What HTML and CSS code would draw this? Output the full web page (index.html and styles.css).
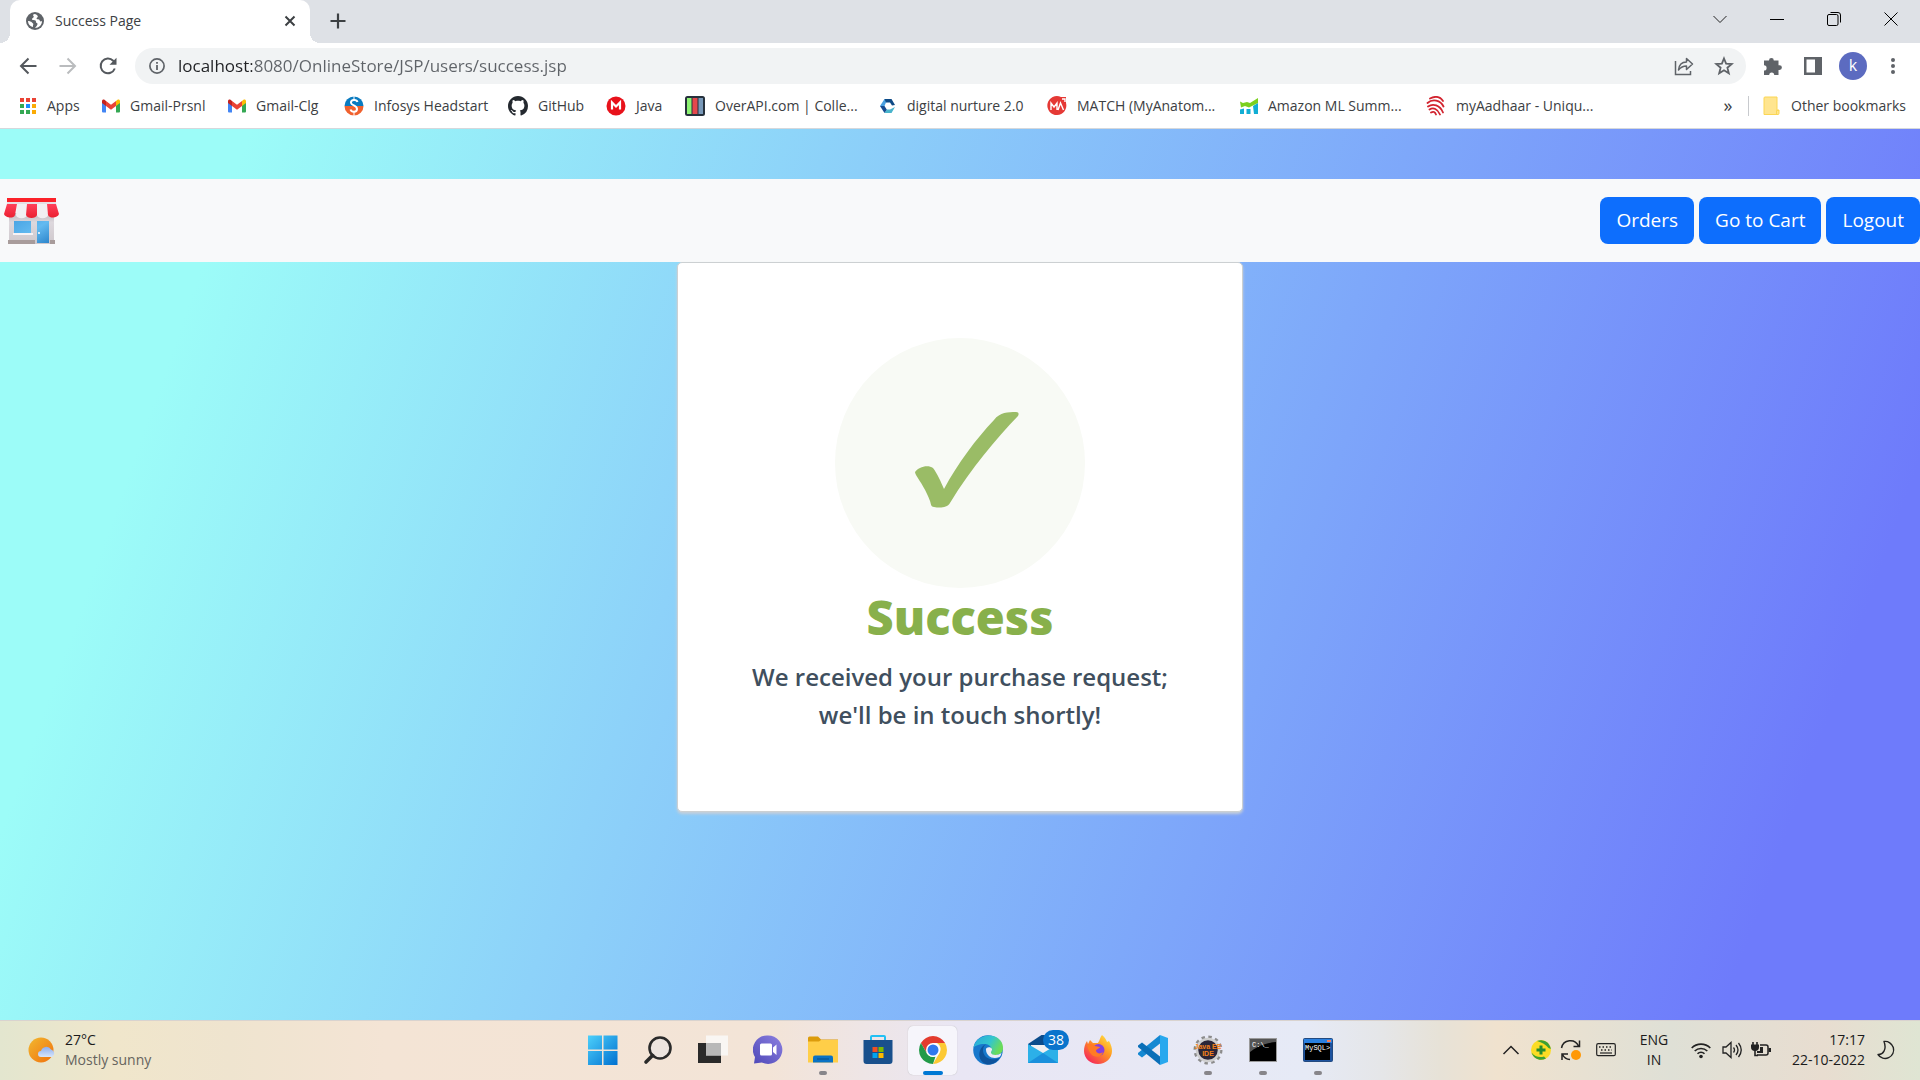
FILE: index.html
```html
<!DOCTYPE html>
<html lang="en">
<head>
<meta charset="utf-8">
<title>Success Page</title>
<link rel="stylesheet" href="styles.css">
</head>
<body>
<header class="browser">
  <div class="tab-strip">
    <div class="tab">
      <svg width="18" height="18" viewBox="0 0 18 18"><circle cx="9" cy="9" r="9" fill="#5f6368"/><path d="M9 2c-2 0-2.500 1-1.500 2 .8 1-.2 1.600-1 2.200C5.500 7 6 8 7.500 8c2 0 2.500.8 2.500 2s1.500.8 1.500 2-1 2-2.500 4c4 0 7-3 7-7-1 .8-2 .5-2.300-.5-.3-1.200-1.200-1-2.200-1.200-1.500 0-1-1.500 0-2C12.500 4.800 11.500 3 9 2zM2 9c1.500 0 3 .5 4 1.500S8 12 7 13v2C4 14.500 2 12 2 9z" fill="#fff"/></svg>
      <span class="tab-title">Success Page</span>
      <button class="icon-btn tab-close" aria-label="Close tab"><svg width="12" height="12" viewBox="0 0 12 12"><path d="M1.500 1.500l9 9M10.500 1.500l-9 9" stroke="#3c4043" stroke-width="2"/></svg></button>
    </div>
    <button class="icon-btn new-tab" aria-label="New tab"><svg width="16" height="16" viewBox="0 0 16 16"><path d="M8 0.500v15M0.500 8h15" stroke="#3c4043" stroke-width="2.200"/></svg></button>
    <div class="window-controls">
      <button class="icon-btn" aria-label="Search tabs"><svg width="14" height="14" viewBox="0 0 14 14"><path d="M.5 4L7 10.500 13.500 4" fill="none" stroke="#222"/></svg></button>
      <button class="icon-btn" aria-label="Minimize"><svg width="14" height="14" viewBox="0 0 14 14"><path d="M0 7.500h14" stroke="#000"/></svg></button>
      <button class="icon-btn" aria-label="Restore"><svg width="14" height="14" viewBox="0 0 14 14"><rect x=".5" y="2.500" width="10.500" height="11" rx="1.500" fill="none" stroke="#000"/><path d="M3.500.5H11a2.500 2.500 0 0 1 2.500 2.500v7.500" fill="none" stroke="#000"/></svg></button>
      <button class="icon-btn" aria-label="Close"><svg width="14" height="14" viewBox="0 0 14 14"><path d="M.5.5l13 13M13.500.5l-13 13" stroke="#000"/></svg></button>
    </div>
  </div>

  <div class="toolbar">
    <button class="icon-btn" aria-label="Back"><svg width="18" height="18" viewBox="0 0 18 18"><path d="M17.500 9H2M9.500 1.500L2 9l7.500 7.500" fill="none" stroke="#54585d" stroke-width="2"/></svg></button>
    <button class="icon-btn" aria-label="Forward"><svg width="18" height="18" viewBox="0 0 18 18"><path d="M.5 9H16M8.500 1.500L16 9l-7.500 7.500" fill="none" stroke="#babcbe" stroke-width="2"/></svg></button>
    <button class="icon-btn" aria-label="Reload"><svg width="18" height="18" viewBox="0 0 18 18"><path d="M15.800 11.500A7.300 7.300 0 1 1 14.200 3.800L16 5.500" fill="none" stroke="#54585d" stroke-width="2"/><path d="M17.500.8v7h-7z" fill="#54585d"/></svg></button>
    <div class="omnibox">
      <svg width="16" height="16" viewBox="0 0 16 16"><circle cx="8" cy="8" r="7.100" fill="none" stroke="#5f6368" stroke-width="1.700"/><path d="M8 7v5M8 4v1.800" stroke="#5f6368" stroke-width="1.800"/></svg>
      <input class="url" type="text" aria-label="Address" value="localhost:8080/OnlineStore/JSP/users/success.jsp">
      <button class="icon-btn" aria-label="Share"><svg width="20" height="20" viewBox="0 0 20 20"><path d="M1.500 5v13.500h15V15" fill="none" stroke="#5f6368" stroke-width="1.500"/><path d="M4.500 14c.5-5 3-8 8-8V2.500L18.500 8l-6 5.500V10c-4 0-6 1.500-8 4z" fill="none" stroke="#5f6368" stroke-width="1.500" stroke-linejoin="round"/></svg></button>
      <button class="icon-btn" aria-label="Bookmark"><svg width="20" height="20" viewBox="0 0 20 20"><path d="M10 2.500l2.100 5.200 5.600.4-4.300 3.600 1.400 5.500L10 14.200l-4.800 3 1.400-5.500L2.300 8.100l5.600-.4z" fill="none" stroke="#5f6368" stroke-width="1.800"/></svg></button>
    </div>
    <button class="icon-btn" aria-label="Extensions"><svg width="18" height="18" viewBox="0 0 18 18"><path d="M0 3.500h5a2.400 2.400 0 0 1 4.800 0h4.700v4.700h1a2.400 2.400 0 0 1 0 4.800h-1v5h-4.300a2.500 2.500 0 0 0-5 0H0v-4.500a2.600 2.600 0 0 0 0-5.200z" fill="#5f6368"/></svg></button>
    <button class="icon-btn" aria-label="Side panel"><svg width="18" height="18" viewBox="0 0 18 18"><path d="M0 0h18v18H0zM2.500 2.500v13h8.500v-13z" fill="#5f6368" fill-rule="evenodd"/></svg></button>
    <button class="icon-btn" aria-label="Profile"><span class="avatar">k</span></button>
    <button class="icon-btn" aria-label="Menu"><svg width="18" height="18" viewBox="0 0 18 18"><g fill="#5f6368"><circle cx="9" cy="3" r="2"/><circle cx="9" cy="9" r="2"/><circle cx="9" cy="15" r="2"/></g></svg></button>
  </div>

  <nav class="bookmarks" aria-label="Bookmarks">
    <a href="#"><svg width="18" height="18" viewBox="0 0 18 18"><path d="M1 1h4v4H1zM7 1h4v4H7zM13 1h4v4h-4z" fill="#ea4335"/><path d="M1 7h4v4H1zM1 13h4v4H1z" fill="#34a853"/><path d="M7 13h4v4H7z" fill="#34a853"/><path d="M7 7h4v4H7z" fill="#1a8cff"/><path d="M13 7h4v4h-4zM13 13h4v4h-4z" fill="#fbab05"/></svg>Apps</a>
    <a href="#"><svg width="18" height="18" viewBox="0 0 18 18"><path d="M0 4v10.500a1 1 0 0 0 1 1h3V7z" fill="#4285f4"/><path d="M18 4v10.500a1 1 0 0 1-1 1h-3V7z" fill="#34a853"/><path d="M14 4l1.500-1.200C16.500 2 18 2.700 18 4v2l-4 3z" fill="#fbbc04"/><path d="M4 9V4l5 3.800L14 4v5l-5 3.800z" fill="#ea4335"/><path d="M0 6V4c0-1.300 1.500-2 2.500-1.200L4 4v5z" fill="#c5221f"/></svg>Gmail-Prsnl</a>
    <a href="#"><svg width="18" height="18" viewBox="0 0 18 18"><path d="M0 4v10.500a1 1 0 0 0 1 1h3V7z" fill="#4285f4"/><path d="M18 4v10.500a1 1 0 0 1-1 1h-3V7z" fill="#34a853"/><path d="M14 4l1.500-1.200C16.500 2 18 2.700 18 4v2l-4 3z" fill="#fbbc04"/><path d="M4 9V4l5 3.800L14 4v5l-5 3.800z" fill="#ea4335"/><path d="M0 6V4c0-1.300 1.500-2 2.500-1.200L4 4v5z" fill="#c5221f"/></svg>Gmail-Clg</a>
    <a href="#"><svg width="20" height="20" viewBox="0 0 20 20"><path d="M.5 10a9.500 9.500 0 0 1 19 0z" fill="#0a7bc0"/><path d="M.5 10a9.500 9.500 0 0 0 19 0z" fill="#f0612e"/><path d="M13.500 6c-1-3-7-2.500-6.500.8C7.500 10 13 9 13 13c0 3.500-5.500 3.500-6.500.5" fill="none" stroke="#fff" stroke-width="2"/><path d="M10 0v4M10 16v4" stroke="#fff"/></svg>Infosys Headstart</a>
    <a href="#"><svg width="20" height="20" viewBox="0 0 16 16"><path fill="#24292f" d="M8 0C3.580 0 0 3.580 0 8c0 3.540 2.290 6.530 5.470 7.590.4.070.55-.17.55-.38 0-.19-.01-.82-.01-1.490-2.010.37-2.530-.49-2.690-.94-.09-.23-.48-.94-.82-1.130-.28-.15-.68-.52-.01-.53.63-.01 1.080.58 1.230.82.72 1.210 1.870.87 2.330.66.070-.52.28-.87.51-1.070-1.780-.2-3.640-.89-3.640-3.950 0-.87.31-1.590.82-2.150-.08-.2-.36-1.020.08-2.120 0 0 .67-.21 2.200.82.64-.18 1.320-.27 2-.27s1.360.09 2 .27c1.530-1.040 2.200-.82 2.200-.82.44 1.100.16 1.920.08 2.120.51.56.82 1.270.82 2.150 0 3.070-1.870 3.750-3.650 3.950.29.25.54.73.54 1.480 0 1.070-.01 1.930-.01 2.200 0 .21.15.46.55.38A8 8 0 0 0 16 8c0-4.420-3.580-8-8-8z"/></svg>GitHub</a>
    <a href="#"><svg width="20" height="20" viewBox="0 0 20 20"><circle cx="10" cy="10" r="9.500" fill="#e8121b"/><path d="M6 13.500v-7l4 4 4-4v7" fill="none" stroke="#fff" stroke-width="2.200"/></svg>Java</a>
    <a href="#"><svg width="20" height="20" viewBox="0 0 20 20"><rect width="20" height="20" rx="2.500" fill="#26313c"/><path d="M2 2h4.500v16H2z" fill="#8df272"/><path d="M7.500 2h5v16h-5z" fill="#e5484c"/><path d="M13.500 2H18v16h-4.500z" fill="#7898b8"/></svg>OverAPI.com | Colle...</a>
    <a href="#"><svg width="18" height="18" viewBox="0 0 18 18"><path d="M5.500 2H12l-5 3.500L5.500 9 1 9z" fill="#4aa0e0"/><path d="M1 9h4.500L8 13l-2.500 3z" fill="#174b91"/><path d="M5.500 16L8 12.500h3l5-2.500-3.500 6z" fill="#49b4cc"/><path d="M5.500 2h7L16 8l-3 .5L11 5.500H7z" fill="#0e4a86"/></svg>digital nurture 2.0</a>
    <a href="#"><svg width="20" height="20" viewBox="0 0 20 20"><path d="M14 1a9.500 9.500 0 1 0 5 6V1z" fill="#e53935"/><path d="M4 14V7l3 4 3-4v7M11 14l2.500-7 3 7M15 3h3v3" fill="none" stroke="#fff" stroke-width="1.400"/></svg>MATCH (MyAnatom...</a>
    <a href="#"><svg width="18" height="18" viewBox="0 0 18 18"><path d="M0 4.500l3 1.500 4-1 3 1 8-5v5L9 10.500 5 9l-4 1.500z" fill="#7bd01e"/><path d="M0 12.500l4-1V17H0zM6.500 12h4v5h-4zM13 9l5-3v11h-4z" fill="#12aed4"/></svg>Amazon ML Summ...</a>
    <a href="#"><svg width="20" height="20" viewBox="0 0 20 20"><g fill="none" stroke="#d2232e" stroke-width="1.800" stroke-linecap="round"><path d="M4 2.500c5-2.500 10-2 13 2.500M1.500 7c5-4.500 13-3 16 3.500M2 10.500c5-3.500 12-1.500 15 6M3.500 13.500c4-2.500 8-.500 10.500 5M5 16.500c2.500-1.500 4-.500 5 2"/></g></svg>myAadhaar - Uniqu...</a>
    <button class="icon-btn more" aria-label="More bookmarks">»</button>
    <a href="#" class="other"><svg width="18" height="20" viewBox="0 0 18 20"><path d="M1 2a1 1 0 0 1 1-1h12v13h2v3.500a1 1 0 0 1-1 1H1z" fill="#ffe58f" stroke="#fbd655"/><path d="M13.500 18v-3.500H16" fill="none" stroke="#fbd655"/></svg>Other bookmarks</a>
  </nav>
</header>

<main class="page">
  <nav class="navbar">
    <a class="brand" href="#" aria-label="Store home">
      <svg width="56" height="48" viewBox="0 0 56 48">
        <defs>
          <linearGradient id="glass" x1="0" y1="0" x2="1" y2="1"><stop offset="0" stop-color="#4aa5e4"/><stop offset=".5" stop-color="#63baf0"/><stop offset="1" stop-color="#2d86cc"/></linearGradient>
          <linearGradient id="wall" x1="0" y1="0" x2="0" y2="1"><stop offset="0" stop-color="#bdb5bb"/><stop offset=".3" stop-color="#ddd8dd"/><stop offset="1" stop-color="#cec8cc"/></linearGradient>
          <linearGradient id="stripe" x1="0" y1="0" x2="0" y2="1"><stop offset="0" stop-color="#ff405a"/><stop offset="1" stop-color="#ea2030"/></linearGradient>
        </defs>
        <path d="M5 16h45v31H5z" fill="url(#wall)"/>
        <path d="M4 43h27v4H4zM46 43h5v4h-5z" fill="#a89c9b"/>
        <path d="M3 1h49v4H3z" fill="#fb2229"/>
        <path d="M3 5h49v2H3z" fill="#e5dfe4"/>
        <path d="M13 7h10v11a5 3 0 0 1-11 0zM33 7h10l1 11a5 3 0 0 1-11 0z" fill="#f1eff2"/>
        <path d="M3 7h10l-2 11c-1 4-10 3-11-1zM23 7h10v11c-1 4-10 4-11 0zM43 7h9l3 10c-1 4-9 5-11 1z" fill="url(#stripe)"/>
        <path d="M10 24h17v13H10zM33 24h12v22H33z" fill="url(#glass)"/>
        <path d="M9 36h20v2H9z" fill="#f6f3f6"/><circle cx="35" cy="36" r="1" fill="#fff"/>
      </svg>
    </a>
    <div class="actions">
      <button class="btn">Orders</button>
      <button class="btn">Go to Cart</button>
      <button class="btn">Logout</button>
    </div>
  </nav>
  <section class="card">
    <div class="badge">
      <svg width="104" height="96" viewBox="0 0 104 96"><path d="M0 60C3 55 13 52 18 56C22 61 26 70 29 77C43 51 61 27 79 8C85 0 93 0 101 0C104 0 104 2 103 4C81 27 57 55 35 91C32 96 25 96 19 95C16 95 16 92 15 89C11 78 6 71 1 63Q0 61 0 60z" fill="#9abc66"/></svg>
    </div>
    <h1>Success</h1>
    <p>We received your purchase request;<br>we'll be in touch shortly!</p>
  </section>
</main>

<footer class="taskbar">
  <div class="weather">
    <svg width="28" height="28" viewBox="0 0 28 28"><defs><linearGradient id="sun" x1="0" y1="0" x2="1" y2="1"><stop offset="0" stop-color="#f2b830"/><stop offset="1" stop-color="#f0700c"/></linearGradient><linearGradient id="cloud" x1="0" y1="0" x2="0" y2="1"><stop offset="0" stop-color="#8caef0"/><stop offset="1" stop-color="#d8e5fa"/></linearGradient></defs><circle cx="13" cy="14" r="12.500" fill="url(#sun)"/><path d="M13 21a3 3 0 0 1 0-6 5.500 5.500 0 0 1 10-1.500 4 4 0 0 1 1 7.500z" fill="url(#cloud)"/></svg>
    <div><div>27°C</div><div class="muted">Mostly sunny</div></div>
  </div>
  <div class="apps">
    <button class="app" aria-label="Start"><svg width="30" height="30" viewBox="0 0 30 30"><defs><linearGradient id="win" x1="0" y1="0" x2="1" y2="1"><stop offset="0" stop-color="#4dd0fb"/><stop offset="1" stop-color="#0070d0"/></linearGradient></defs><path d="M0 .5h14v14H0zM15.500.5h14v14h-14zM0 16h14v14H0zM15.500 16h14v14h-14z" fill="url(#win)"/></svg></button>
    <button class="app" aria-label="Search"><svg width="30" height="30" viewBox="0 0 30 30"><circle cx="17" cy="13" r="10.500" fill="#ece4df" stroke="#2a2a2a" stroke-width="2.600"/><path d="M9.500 20.500L3 27" stroke="#2a2a2a" stroke-width="3.600" stroke-linecap="round"/></svg></button>
    <button class="app" aria-label="Task view"><svg width="30" height="30" viewBox="0 0 30 30"><path d="M0 8h23v20H0z" fill="#2a2a2a"/><path d="M8 .5h22v20H8z" fill="#fafafa" opacity=".8"/><path d="M8 8h15v12.500H8z" fill="#b8b8b8"/></svg></button>
    <button class="app" aria-label="Chat"><svg width="30" height="30" viewBox="0 0 30 30"><defs><linearGradient id="chat" x1="1" y1="0" x2="0" y2="1"><stop offset="0" stop-color="#8c80e0"/><stop offset="1" stop-color="#4e48b8"/></linearGradient></defs><path d="M15 .5a14.200 14.200 0 1 1-6 27L1 28.500l1-6.500A14.200 14.200 0 0 1 15 .5z" fill="url(#chat)"/><rect x="7" y="8.500" width="12" height="12" rx="1.500" fill="#fff"/><path d="M20 12.500l3.500-3v10.500L20 17z" fill="#fff"/></svg></button>
    <button class="app running" aria-label="File Explorer"><svg width="30" height="30" viewBox="0 0 30 30"><path d="M0 3a1.500 1.500 0 0 1 1.500-1.500H10l3 3H30V10H0z" fill="#dc9c0c"/><path d="M0 6.500h11l2-1.500h17v22.500H0z" fill="#ffce48"/><path d="M5 27.500v-5a2 2 0 0 1 2-2h16a2 2 0 0 1 2 2v5z" fill="#0a72c4"/><path d="M9 24h12" stroke="#084c86"/></svg></button>
    <button class="app" aria-label="Microsoft Store"><svg width="30" height="30" viewBox="0 0 30 30"><path d="M8 6V2a1 1 0 0 1 1-1h12a1 1 0 0 1 1 1v4" fill="none" stroke="#22c0f4" stroke-width="2"/><path d="M.5 5h29v21a3 3 0 0 1-3 3h-23a3 3 0 0 1-3-3z" fill="#19508c"/><path d="M9.500 12h5v5h-5z" fill="#f25022"/><path d="M15.500 12h5v5h-5z" fill="#7fba00"/><path d="M9.500 18h5v5h-5z" fill="#00a4ef"/><path d="M15.500 18h5v5h-5z" fill="#ffb900"/></svg></button>
    <button class="app active" aria-label="Chrome"><svg width="28" height="28" viewBox="0 0 28 28"><path d="M1.900 7A14 14 0 0 1 26.100 7H14L8 17.500z" fill="#e33b2e"/><path d="M1.900 7l6.100 10.500a7 7 0 0 0 8.500 3L14 28A14 14 0 0 1 1.900 7z" fill="#229a48"/><path d="M26.100 7A14 14 0 0 1 14 28l6.100-10.500A7 7 0 0 0 18 7z" fill="#fcc934"/><circle cx="14" cy="14" r="7" fill="#fff"/><circle cx="14" cy="14" r="5.500" fill="#3078ee"/></svg></button>
    <button class="app" aria-label="Edge"><svg width="30" height="30" viewBox="0 0 30 30"><defs><linearGradient id="edge" x1="0" y1="0" x2="1" y2=".4"><stop offset="0" stop-color="#28a7dc"/><stop offset=".6" stop-color="#34c5ce"/><stop offset="1" stop-color="#6bdc58"/></linearGradient></defs><circle cx="15" cy="15" r="14.800" fill="#1878cc"/><path d="M.5 12.500C4-4 30-3 30 13c0 5-4 7-8 7-3 0-5-1-4-3 2-5-2-8-7-8C6 9 2 11 .5 12.500z" fill="url(#edge)"/><path d="M13 9c-4 3-4 9 0 13 4 3 10 3 14 .500-3 5-8 7.500-13 7-7-2-9-9-7-14 1-3 3-5 6-6.500z" fill="#0e539c"/><path d="M13 15c-1-3 5-4 6-1 .5 1.500-1.500 2.500-1 4 1 2.500 7 2.500 10.500 0-.5 2-1 3-2 4-7 3-13-1-13.500-7z" fill="#eceaf6"/></svg></button>
    <button class="app" aria-label="Mail"><svg width="30" height="30" viewBox="0 0 30 30"><path d="M0 9L15-1l15 10v6H0z" fill="#0b4c8c"/><path d="M3 10h24v10H3z" fill="#f0f0f2"/><path d="M0 9l15 9L30 9v19H0z" fill="#2cb0e8"/><path d="M0 28l15-10 15 10z" fill="#1a90dc"/></svg><span class="count">38</span></button>
    <button class="app" aria-label="Firefox"><svg width="30" height="30" viewBox="0 0 30 30"><defs><linearGradient id="fox" x1="1" y1="0" x2=".2" y2="1"><stop offset="0" stop-color="#fff04c"/><stop offset=".45" stop-color="#ff9a22"/><stop offset="1" stop-color="#f5225c"/></linearGradient></defs><path d="M19 0c3 2 4 5 5 7l2-1c2 3 3 7 3 10 0 7-6 13-14 13S1 23 1 16c0-4 1-7 3-10l1 3 2-4 3 3 5 0c2-3 2-6 4-8z" fill="url(#fox)"/><circle cx="15.500" cy="15" r="6" fill="#8740dd"/><path d="M4 10c3-2 7-1 8 1l5 1c-1 2-4 2-4 4 1 3 5 3 7 1-1 5-7 6-11 3-3-3-4-6-5-10z" fill="#ff7b25"/></svg></button>
    <button class="app" aria-label="Visual Studio Code"><svg width="30" height="30" viewBox="0 0 30 30"><path d="M22 0l8 3v24l-8 3z" fill="#29a8ee"/><path d="M22 0v8.500L4 22.500 0 19.500v-1.500z" fill="#1488d2"/><path d="M22 30v-8.500L4 7.500 0 10.500V12z" fill="#0a6fb8"/></svg></button>
    <button class="app running" aria-label="Eclipse Java EE IDE"><svg width="30" height="30" viewBox="0 0 30 30"><circle cx="15" cy="15" r="13" fill="none" stroke="#8c8c8c" stroke-width="3" stroke-dasharray="3.400 3.400"/><circle cx="15" cy="15" r="11" fill="#2b2638" stroke="#cfcfcf" stroke-width="2.500"/><g font-family="Liberation Sans, sans-serif" font-size="7" font-weight="700" fill="#f58018" text-anchor="middle"><text x="15" y="14">Java EE</text><text x="15" y="21">IDE</text></g></svg></button>
    <button class="app running" aria-label="Command Prompt"><svg width="28" height="24" viewBox="0 0 28 24"><rect x=".5" y=".5" width="27" height="23" fill="#000" stroke="#9a9a9a"/><path d="M1 1h26v3C14 5 6 10 1 14z" fill="#555"/><text x="3" y="9" font-family="Liberation Mono, monospace" font-size="7" fill="#fff">C:\_</text></svg></button>
    <button class="app running" aria-label="MySQL"><svg width="30" height="24" viewBox="0 0 30 24"><rect x=".5" y=".5" width="29" height="23" rx="1" fill="#1d53a0" stroke="#234a80"/><path d="M1 1h28v4H1z" fill="#2a80e0"/><path d="M24 2h4v2h-4z" fill="#f08060"/><path d="M2 5h25v17H2z" fill="#000"/><text x="2" y="12" font-family="Liberation Mono, monospace" font-size="7" fill="#fff">MySQL&gt;</text></svg></button>
  </div>
  <div class="tray">
    <svg width="18" height="18" viewBox="0 0 18 18"><path d="M1.500 13L9 5.500l7.500 7.500" fill="none" stroke="#222" stroke-width="1.500"/></svg>
    <svg width="20" height="20" viewBox="0 0 20 20"><circle cx="10" cy="10" r="10" fill="#fbdc24"/><path d="M6 1a10 10 0 0 1 13.800 8l-2.300-1C15 4.500 11 2.500 6 1zM.5 12.500c3 4 8 5.500 12.500 4l2 2C10 21 3 20 .5 12.500z" fill="#3ba035"/><path d="M10 5.500v9M5.500 10h9" stroke="#258c2c" stroke-width="3"/></svg>
    <svg width="22" height="22" viewBox="0 0 22 22"><path d="M1.500 9a9 9 0 0 1 17-2M19.500 1.500v6h-6M10 20.500a9 9 0 0 1-7.500-5M2 21v-6h6" fill="none" stroke="#222" stroke-width="1.500"/><circle cx="16" cy="16" r="5" fill="#ff9806"/></svg>
    <svg width="20" height="20" viewBox="0 0 20 20"><rect x=".7" y="3.700" width="18.600" height="12" rx="1.500" fill="none" stroke="#222" stroke-width="1.200"/><path d="M3 7h14M5 10h11" stroke="#222" stroke-width="1.500" stroke-dasharray="1.500 2"/><path d="M4 13h12" stroke="#222" stroke-width="1.200"/></svg>
    <div class="lang">ENG<br>IN</div>
    <svg width="20" height="18" viewBox="0 0 20 18"><g fill="none" stroke="#222" stroke-width="1.600"><path d="M.7 7a13 13 0 0 1 18.600 0M3.700 10a9 9 0 0 1 12.600 0M6.500 12.800a5 5 0 0 1 7 0"/></g><circle cx="10" cy="15.500" r="1.800" fill="#222"/></svg>
    <svg width="20" height="18" viewBox="0 0 20 18"><g fill="none" stroke="#222" stroke-width="1.300"><path d="M1 6h3l5-4.500v15L4 12H1zM11.500 6.500q2 2.500 0 5M14 4q4 5 0 10M16.500 2q5.500 7 0 14"/></g></svg>
    <svg width="20" height="18" viewBox="0 0 20 18"><path d="M2 1v3M6 1v3M4 8v6.500h3" stroke="#222" stroke-width="1.600" fill="none"/><path d="M0 3.500h8V6a4 4 0 0 1-8 0z" fill="#222"/><path d="M9 4h6a2 2 0 0 1 2 2v6a2 2 0 0 1-2 2H6" fill="none" stroke="#222" stroke-width="1.500"/><path d="M9 6h3v6H6v-2h3zM17.500 7H20v4h-2.500z" fill="#222"/></svg>
    <div class="clock">17:17<br>22-10-2022</div>
    <svg width="18" height="20" viewBox="0 0 18 20"><path d="M7 1.500a8.500 8.500 0 1 1-6 13c5 .5 9-5 6-13z" fill="none" stroke="#222" stroke-width="1.400" stroke-linejoin="round"/></svg>
  </div>
</footer>
</body>
</html>
```
FILE: styles.css
```css
* { box-sizing: border-box; }

body {
  margin: 0;
  min-height: 100vh;
  display: flex;
  flex-direction: column;
  font-family: "Open Sans", "Noto Sans", sans-serif;
  font-size: 14px;
  line-height: 20px;
}

svg { display: block; flex: none; }
button { font: inherit; color: inherit; cursor: pointer; }

.icon-btn {
  display: flex;
  align-items: center;
  justify-content: center;
  padding: 0;
  border: 0;
  background: none;
}

/* Browser window */
.browser {
  background: #fff;
  color: #3c4043;
  border-bottom: 1px solid #d5d8dc;
}

.tab-strip {
  display: flex;
  height: 43px;
  padding: 0 1px 0 10px;
  background: #dee1e6;
}

.tab {
  position: relative;
  display: flex;
  align-items: center;
  gap: 11px;
  width: 300px;
  padding: 0 14px 2px 16px;
  border-radius: 10px 10px 0 0;
  background: #fff;
}

.tab::before,
.tab::after {
  content: "";
  position: absolute;
  bottom: 0;
  width: 10px;
  height: 10px;
}
.tab::before { left: -10px; background: radial-gradient(circle at 0 0, transparent 10px, #fff 10px); }
.tab::after { right: -10px; background: radial-gradient(circle at 100% 0, transparent 10px, #fff 10px); }

.tab-title { flex: 1; }
.new-tab { width: 34px; height: 42px; margin-left: 11px; }

.window-controls {
  display: grid;
  grid-template-columns: repeat(4, 57px);
  height: 37px;
  margin-left: auto;
}

.toolbar {
  display: flex;
  align-items: center;
  height: 46px;
  padding: 0 7px 0 8px;
}
.toolbar > .icon-btn { width: 40px; height: 40px; }

.omnibox {
  display: flex;
  flex: 1;
  align-items: center;
  height: 36px;
  margin: 0 7px;
  padding: 0 2px 0 14px;
  border-radius: 18px;
  background: #f1f3f4;
}
.omnibox .icon-btn { width: 40px; height: 36px; }

.url {
  flex: 1;
  min-width: 0;
  margin-left: 13px;
  padding: 0;
  border: 0;
  outline: 0;
  font: 17px/24px "Open Sans", "Noto Sans", sans-serif;
  color: transparent;
  background: linear-gradient(90deg, #202124 74px, #5f6368 74px);
  -webkit-background-clip: text;
  background-clip: text;
}

.avatar {
  width: 28px;
  height: 28px;
  border-radius: 50%;
  background: #5c6bc0;
  color: #fff;
  font-size: 16px;
  line-height: 26px;
}

.bookmarks {
  display: grid;
  grid-template-columns: 83px 126px 116px 164px 98px 79px 194px 168px 193px 186px 1fr 40px 172px;
  align-items: center;
  height: 39px;
  padding: 0 0 5px 19px;
  white-space: nowrap;
}
.bookmarks a {
  display: flex;
  align-items: center;
  gap: 10px;
  color: inherit;
  text-decoration: none;
}
.more { font-size: 18px; padding-bottom: 3px; }
.bookmarks .other {
  height: 20px;
  padding-left: 14px;
  border-left: 1px solid #c8cace;
}

/* Store page */
.page {
  flex: 1;
  padding-top: 50px;
  background: linear-gradient(109.6deg, #9cfcf8 11.2%, #6e7bfb 91.1%);
}

.navbar {
  display: flex;
  align-items: center;
  justify-content: space-between;
  height: 83px;
  padding-left: 4px;
  background: #f8f9fa;
}

.actions { display: flex; gap: 5px; }

.btn {
  padding: 8px 16px;
  border: 0;
  border-radius: 8px;
  background: #0d6efd;
  color: #fff;
  font-size: 19px;
  line-height: 31px;
}

.card {
  width: fit-content;
  margin: 0 auto;
  padding: 75px 74px 77px;
  border: 1px solid #ccd0d2;
  border-radius: 5px;
  background: #fff;
  box-shadow: 0 2px 3px #c8d0d8;
  text-align: center;
}

.badge {
  display: flex;
  align-items: center;
  justify-content: center;
  width: 250px;
  height: 250px;
  margin: 0 auto;
  padding: 0 0 6px 14px;
  border-radius: 50%;
  background: #f8faf5;
}

.card h1 {
  margin: 0 0 12px;
  color: #88b04b;
  font-family: "Open Sans", sans-serif;
  font-size: 47px;
  font-weight: 800;
  line-height: 58px;
}

.card p {
  margin: 0;
  color: #404f5e;
  font-size: 24px;
  font-weight: 600;
  line-height: 38px;
}

/* Taskbar */
.taskbar {
  display: grid;
  grid-template-columns: 1fr auto 1fr;
  align-items: center;
  height: 60px;
  padding-bottom: 1px;
  border-top: 1px solid #d9d3cf;
  background: linear-gradient(90deg, #e3e6cf 0%, #f0e6cb 6%, #efe4cf 12%, #f4e4d5 20%, #f3e4d7 40%, #e9e6f4 50%, #e6eaf6 68%, #e5e6e8 72%, #e7e2d7 75%, #f0e2ce 78%, #dfe0d6 87%, #e8ddd0 95%, #dfe5d3 100%);
  color: #1b1b1b;
}

.weather {
  display: flex;
  align-items: center;
  gap: 9px;
  padding-left: 28px;
}
.muted { color: #66645e; }

.apps { display: flex; }

.app {
  position: relative;
  display: flex;
  align-items: center;
  justify-content: center;
  width: 49px;
  height: 49px;
  margin: 0 3px;
  padding: 0;
  border: 0;
  border-radius: 5px;
  background: none;
}
.app.active { background: #f6f5fb; box-shadow: 0 0 1px #aaa; }
.app.running::after,
.app.active::after {
  content: "";
  position: absolute;
  bottom: 0;
  width: 8px;
  height: 4px;
  border-radius: 2px;
  background: #87858a;
}
.app.active::after { width: 20px; background: #0078d4; }

.count {
  position: absolute;
  top: 4px;
  right: -2px;
  width: 26px;
  border-radius: 10px;
  background: #0a74cc;
  color: #fff;
  text-align: center;
}

.tray {
  display: grid;
  grid-template-columns: 31px 30px 30px 40px 56px 38px 24px 34px 87px 42px;
  align-items: center;
  justify-content: end;
  justify-items: center;
  padding-right: 13px;
}
.lang { text-align: center; }
.clock { justify-self: end; text-align: right; }
```
